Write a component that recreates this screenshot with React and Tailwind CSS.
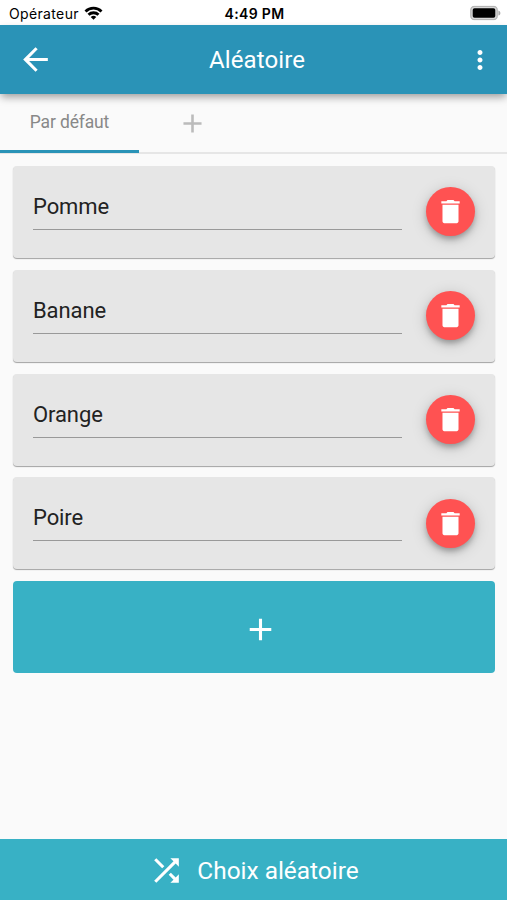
const PATHS = {
  back: 'M20 11H7.83l5.59-5.59L12 4l-8 8 8 8 1.41-1.41L7.83 13H20v-2z',
  more: 'M12 8c1.1 0 2-.9 2-2s-.9-2-2-2-2 .9-2 2 .9 2 2 2zm0 2c-1.1 0-2 .9-2 2s.9 2 2 2 2-.9 2-2-.9-2-2-2zm0 6c-1.1 0-2 .9-2 2s.9 2 2 2 2-.9 2-2-.9-2-2-2z',
  trash: 'M5.8 19.6c0 .8.6 1.4 1.4 1.4h9.6c.8 0 1.4-.6 1.4-1.4V6.7H5.8v12.9zM19.1 4h-3.9l-.9-.9H9.7l-.9.9H4.9v1.8h14.2V4z',
  add: 'M19 13h-6v6h-2v-6H5v-2h6V5h2v6h6v2z',
  shuffle: 'M10.59 9.17L5.41 4 4 5.41l5.17 5.17 1.42-1.41zM14.5 4l2.04 2.04L4 18.59 5.41 20 17.96 7.46 20 9.5V4h-5.5zm.33 9.41l-1.41 1.41 3.13 3.13L14.5 20H20v-5.5l-2.04 2.04-3.13-3.13z',
};

function Icon({ name, className }) {
  return (
    <svg viewBox="0 0 24 24" fill="currentColor" className={className}>
      <path d={PATHS[name]} />
    </svg>
  );
}

function StatusBar() {
  return (
    <div className="grid h-[25px] grid-cols-3 items-center bg-white pl-[9px] pr-[6px] pt-[2px] font-['Inter','Liberation_Sans',sans-serif] text-black">
      <div className="flex items-center gap-[5px]">
        <span className="text-[14px] leading-none tracking-[0.35px]">Opérateur</span>
        <svg viewBox="0 0 18 14" className="h-[14px] w-[19px] -translate-y-px" fill="none" stroke="currentColor" strokeWidth="2.8">
          <path d="M1 5.4a11.4 11.4 0 0 1 16 0" />
          <path d="M4 8.8a7.1 7.1 0 0 1 10 0" />
          <path d="M9 13.8 6.2 11a4 4 0 0 1 5.6 0z" fill="currentColor" stroke="none" />
        </svg>
      </div>
      <span className="-ml-px text-center text-[14px] font-semibold leading-none tracking-[0.35px]">4:49 PM</span>
      <svg viewBox="0 0 31 15" className="h-[15px] w-[31px] -translate-y-[0.5px] justify-self-end">
        <rect x="0.8" y="0.8" width="26.4" height="13.4" rx="3.6" fill="#d8d8d8" stroke="#b5b5b5" strokeWidth="1.3" />
        <rect x="2.7" y="2.7" width="22.6" height="9.6" rx="1.8" fill="#000" />
        <path d="M28.4 4.9c2.6.9 2.6 4.3 0 5.2z" fill="#aaa" />
      </svg>
    </div>
  );
}

function ItemCard({ label }) {
  return (
    <div className="flex h-[92px] items-start rounded-[4px] bg-[#e6e6e6] pl-5 pr-[19.5px] shadow-[0_1px_1px_rgba(0,0,0,0.35)]">
      <div className="mt-[26px] h-[38px] w-[369px] border-b border-[#999] text-[22px] leading-[30px] tracking-[-0.1px] text-[#222]">
        {label}
      </div>
      <button className="ml-auto mt-[21.3px] flex size-[49px] items-center justify-center rounded-full bg-[#ff5252] text-white shadow-[0_4px_6px_-1px_rgba(0,0,0,0.3),0_3px_15px_rgba(0,0,0,0.17)]">
        <Icon name="trash" className="size-[31px]" />
      </button>
    </div>
  );
}

export default function App() {
  return (
    <div className="flex h-[900px] w-[507px] flex-col overflow-hidden bg-[#fafafa] font-['Roboto',sans-serif]">
      <StatusBar />
      <header className="relative grid h-[69px] shrink-0 grid-cols-[60px_1fr_60px] items-center bg-[#2a93b7] pl-[17px] pr-[12px] text-white shadow-[0_4px_8px_-1px_rgba(0,0,0,0.38)]">
        <Icon name="back" className="size-[37px]" />
        <h1 className="pl-[2px] text-center text-[24px] leading-none tracking-[0.1px]">Aléatoire</h1>
        <Icon name="more" className="size-[30px] justify-self-end" />
      </header>
      <nav className="flex h-[60px] shrink-0 border-b-2 border-[#e6e6e6]">
        <div className="-mb-[2px] flex h-[59px] w-[139px] items-center justify-center border-b-[3px] border-[#2a93b7] text-[17.5px] tracking-[-0.15px] text-[#888]">
          <span className="pt-px">Par défaut</span>
        </div>
        <div className="flex w-[106px] items-center justify-center text-[#bbb]">
          <Icon name="add" className="size-[31px]" />
        </div>
      </nav>
      <main className="flex flex-1 flex-col gap-[11.8px] pl-[13px] pr-[12.5px] pt-[12px]">
        <ItemCard label="Pomme" />
        <ItemCard label="Banane" />
        <ItemCard label="Orange" />
        <ItemCard label="Poire" />
        <button className="flex h-[92px] items-center justify-center rounded-[4px] bg-[#38b1c5] pl-[13px] pt-[4px] text-white">
          <Icon name="add" className="size-[37px]" />
        </button>
      </main>
      <footer className="flex h-[61px] shrink-0 items-center justify-center gap-[12px] bg-[#38b1c5] pt-[2px] text-[24.4px] text-white">
        <Icon name="shuffle" className="size-[37px]" />
        <span className="pt-px">Choix aléatoire</span>
      </footer>
    </div>
  );
}
